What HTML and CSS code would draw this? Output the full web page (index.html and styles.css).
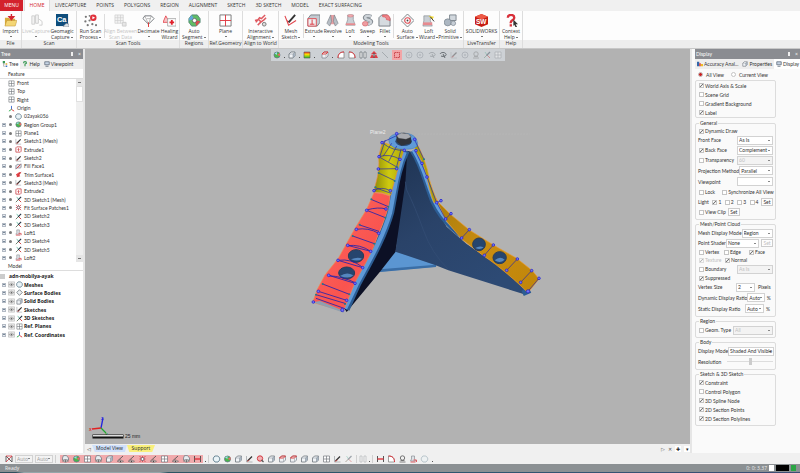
FILE: index.html
```html
<!DOCTYPE html>
<html lang="en">
<head>
<meta charset="utf-8">
<title>Model workspace</title>
<link rel="stylesheet" href="styles.css">
</head>
<body>
<svg class="defs" aria-hidden="true">
  <defs>
    <linearGradient id="redFace" x1="0" y1="0" x2="1" y2="1"><stop offset="0" stop-color="#ff6a62"/><stop offset=".6" stop-color="#f9544f"/><stop offset="1" stop-color="#fb6c64"/></linearGradient>
    <linearGradient id="yellowFace"><stop offset="0" stop-color="#8d8a08"/><stop offset=".5" stop-color="#cfca10"/><stop offset="1" stop-color="#aea80a"/></linearGradient>
    <linearGradient id="orangeFace" x1="0" y1="0" x2="1" y2="1"><stop offset="0" stop-color="#a87d0c"/><stop offset=".5" stop-color="#c98c10"/><stop offset="1" stop-color="#c08609"/></linearGradient>
    <linearGradient id="blueFace" x1="0" y1="0" x2=".6" y2="1"><stop offset="0" stop-color="#1f3453"/><stop offset=".5" stop-color="#2a4369"/><stop offset="1" stop-color="#2d4a74"/></linearGradient>
    <linearGradient id="rainbow" x1="0" y1="0" x2="0" y2="1"><stop offset="0" stop-color="#e33"/><stop offset=".4" stop-color="#fd0"/><stop offset="1" stop-color="#2b3"/></linearGradient>
  </defs>
  <symbol id="plane" viewBox="0 0 8 8"><path d="M1 1h6v6H1zM4 1v6M1 4h6" fill="#fff" stroke="#72777c" stroke-width=".7"/></symbol>
  <symbol id="axes" viewBox="0 0 8 8"><path d="M4 5V1" stroke="#36c" fill="none"/><path d="M4 5L1 7" stroke="#2a4" fill="none"/><path d="M4 5l3 2" stroke="#d33" fill="none"/></symbol>
  <symbol id="mesh" viewBox="0 0 8 8"><path d="M2.4 1h3L7.2 3v2L5.500 7h-3L.8 5V3z" fill="#e9f3f7" stroke="#5f7d8c" stroke-width=".9"/></symbol>
  <symbol id="region" viewBox="0 0 8 8"><circle cx="4" cy="4" r="3" fill="#4ab84a" stroke="#678" stroke-width=".8"/><path d="M4 4l3-2v3z" fill="#e66"/><path d="M4 4L1.500 2.500 4 1z" fill="#9de"/></symbol>
  <symbol id="sketch" viewBox="0 0 8 8"><path d="M1 1v6h6" fill="none" stroke="#8a9096" stroke-width=".6"/><path d="M2 6l4.500-4.500" stroke="#333" stroke-width="1.300"/><path d="M1.500 6.500L4 5" stroke="#d44" stroke-width=".7"/></symbol>
  <symbol id="sketch3" viewBox="0 0 8 8"><path d="M1 7l3-3 3 3" fill="none" stroke="#c33"/><path d="M2 1l2 3-3 3" fill="none" stroke="#3a8" stroke-width=".7"/><path d="M3.500 4.500L7 1" stroke="#234" stroke-width="1.300"/></symbol>
  <symbol id="treeicon" viewBox="0 0 8 8"><path d="M2 2v5h3M2 4h3" fill="none" stroke="#888" stroke-width=".7"/><path d="M1 0h3v3H1z" fill="#3a9a55"/><path d="M5 3h2v2H5z" fill="#e2a92c"/><path d="M5 6h2v2H5z" fill="#3c78c8"/></symbol>
  <symbol id="monitor" viewBox="0 0 8 8"><path d="M1 1h6v4H1z" fill="#c6d4e4" stroke="#4d5b6b" stroke-width=".9"/><path d="M2 7h4" stroke="#4d5b6b"/></symbol>
  <symbol id="box" viewBox="0 0 8 8"><path d="M1 3l2-2h4v4L5 7H1z" fill="#f1f4f7" stroke="#5c646c" stroke-width=".7"/><path d="M5 3l2-2v4L5 7z" fill="#a9b5c2"/><path d="M1 3h4v4M5 3l2-2" fill="none" stroke="#7d868f" stroke-width=".5"/></symbol>
  <symbol id="boxred" viewBox="0 0 8 8"><path d="M1 3l2-2h4v4L5 7H1z" fill="#eef0f3" stroke="#78808a" stroke-width=".7"/><path d="M1 3l2-2h4M1 3h4l2-2" fill="none" stroke="#d33" stroke-width=".9"/><path d="M5 3v4" stroke="#9aa2aa" stroke-width=".6"/></symbol>
  <symbol id="extrude" viewBox="0 0 8 8"><path d="M1 2l1-1h5v5L6 7H1z" fill="#fff" stroke="#c9434a" stroke-width=".9"/><path d="M4 3v3M3 4l1-1 1 1" fill="none" stroke="#c9232a" stroke-width=".8"/></symbol>
  <symbol id="fill" viewBox="0 0 8 8"><path d="M1 3c2-3 4 0 6-2v4c-2 2-4-1-6 2z" fill="#dce3ea" stroke="#667" stroke-width=".7"/><path d="M2 6l4-4" stroke="#d33"/></symbol>
  <symbol id="trim" viewBox="0 0 8 8"><path d="M1 4l4-3 2 1-2 2 1 2-3 1z" fill="#e2474d"/><path d="M2 7L7 1" stroke="#b22" stroke-width=".7"/></symbol>
  <symbol id="patch" viewBox="0 0 8 8"><path d="M1 1l6 6M7 1L1 7M4 1v6M1 4h6" stroke="#d8454c" stroke-width=".9"/><circle cx="4" cy="4" r="1.500" fill="#fff" stroke="#456" stroke-width=".7"/></symbol>
  <symbol id="zoomred" viewBox="0 0 8 8"><circle cx="3.500" cy="3.500" r="2.700" fill="#f3b2b5" stroke="#d33c44"/><path d="M5 5l2 2" stroke="#555" stroke-width="1.200"/></symbol>
  <symbol id="loft" viewBox="0 0 8 8"><path d="M2 1h3v3l1 2H1l1-2z" fill="#dfe3e8" stroke="#7b8086" stroke-width=".6"/><path d="M1 7h5M4 5h3v2" fill="none" stroke="#e05a60"/></symbol>
  <symbol id="surface" viewBox="0 0 8 8"><path d="M4 .8L7.200 4 4 7.200.8 4z" fill="#eef1f4" stroke="#667077" stroke-width=".9"/></symbol>
  <symbol id="eye" viewBox="0 0 8 8"><path d="M.5 1h7v6h-7z" fill="#eee" stroke="#aaa" stroke-width=".6"/><path d="M1 4q3-3 6 0-3 3-6 0z" fill="#fff" stroke="#777" stroke-width=".6"/><circle cx="4" cy="4" r="1" fill="#666"/></symbol>
  <symbol id="eyemesh" viewBox="0 0 8 8"><path d="M2 .6h3L7 3v2H1V3z" fill="#e7edf0" stroke="#65737b" stroke-width=".7"/><path d="M1 6q3-3 6 0-3 2.500-6 0z" fill="#fff" stroke="#555" stroke-width=".6"/><circle cx="4" cy="6" r=".8" fill="#333"/></symbol>
  <symbol id="eyeline" viewBox="0 0 8 8"><path d="M1 6L6.500 1" stroke="#555" stroke-width=".9"/><path d="M1 6.300q3-3 6 0-3 2.500-6 0z" fill="#fdd" stroke="#555" stroke-width=".6"/><circle cx="4" cy="6.200" r=".8" fill="#333"/></symbol>
  <symbol id="gauge" viewBox="0 0 8 8"><path d="M1 1v6M7 1v6" stroke="#555"/><path d="M1 4h6" stroke="#e0363d" stroke-width="1.400"/></symbol>
  <symbol id="arc" viewBox="0 0 8 8"><path d="M1 7V1c4 0 6 2 6 6z" fill="#fff" stroke="#777" stroke-width=".7"/><path d="M1 1c4 0 6 2 6 6" fill="none" stroke="#e0363d"/></symbol>
  <symbol id="arcleft" viewBox="0 0 8 8"><path d="M7 7V1C3 1 1 3 1 7z" fill="#fff" stroke="#777" stroke-width=".7"/><path d="M7 1C3 1 1 3 1 7" fill="none" stroke="#e0363d"/></symbol>
  <symbol id="mark" viewBox="0 0 8 8"><circle cx="4" cy="3" r="2.200" fill="none" stroke="#666" stroke-width=".9"/><path d="M1 7h6M2 5.500h4" stroke="#666" stroke-width=".8"/></symbol>
  <symbol id="ghost" viewBox="0 0 8 8"><circle cx="4" cy="4" r="3" fill="none" stroke="#a9afb5" stroke-width=".8"/><path d="M3 4h2M4 3v2" stroke="#a9afb5" stroke-width=".6"/></symbol>
  <symbol id="lasso" viewBox="0 0 8 8"><path d="M1 3c1-2 5-2 6 0s-3 3-5 2" fill="none" stroke="#666c71"/><path d="M4 3l2 4" stroke="#666c71"/></symbol>
  <symbol id="twin" viewBox="0 0 8 8"><path d="M1 1h2v6H1zM5 1h2v6H5z" fill="#fff" stroke="#70767c" stroke-width=".8"/></symbol>
  <symbol id="selrect" viewBox="0 0 8 8"><path d="M1.500 1.500h5v5h-5z" fill="none" stroke="#c0343b" stroke-width=".8" stroke-dasharray="1.500 .5"/></symbol>
</svg>

<nav class="menu">
  <button class="menu-main">MENU</button>
  <a href="#" class="home">HOME</a><a href="#">LIVECAPTURE</a><a href="#">POINTS</a><a href="#">POLYGONS</a><a href="#">REGION</a><a href="#">ALIGNMENT</a><a href="#">SKETCH</a><a href="#">3D SKETCH</a><a href="#">MODEL</a><a href="#">EXACT SURFACING</a>
</nav>

<header class="ribbon">
  <section class="group g-file"><div class="tools">
    <button class="tool w20"><svg viewBox="0 0 14 14"><path d="M1 4h4l1 1h6v8H1z" fill="#d8ab3d"/><path d="M3 7h11l-2 6H1z" fill="#f4d675" stroke="#b98d2c" stroke-width=".5"/><path d="M8 0v4M5.500 3L8 6l2.500-3z" stroke="#d42730" stroke-width="1.500" fill="#d42730"/></svg><span>Import</span><i></i></button>
  </div><h2>File</h2></section>
  <section class="group g-scan"><div class="tools">
    <button class="tool w26" disabled><svg viewBox="0 0 14 14"><path d="M2 2h3v9H2zM6 1h3v9H6z" fill="#eee" stroke="#bbb"/><path d="M9 5l4 3v4h-3" fill="none" stroke="#bbb"/></svg><span>LiveCapture</span><i></i></button>
    <button class="tool w26"><svg viewBox="0 0 14 14"><path d="M0 0h13v13H0z" fill="#0e4d7c"/><text x="1" y="9" class="ca">Ca</text><path d="M8 13l3-3 3 1v3H8z" fill="#d9e1e6" stroke="#667" stroke-width=".5"/></svg><span>Geomagic<br>Capture <i></i></span></button>
  </div><h2>Scan</h2></section>
  <section class="group g-scantools"><div class="tools">
    <button class="tool w26"><svg viewBox="0 0 14 14"><g fill="#777"><circle cx="2" cy="3" r="1.200"/><circle cx="6" cy="2" r="1"/><circle cx="1.500" cy="8" r="1.200"/><circle cx="6" cy="7" r="1.200"/><circle cx="4" cy="12" r="1.200"/><circle cx="9" cy="11" r="1.200"/><circle cx="13" cy="12" r="1.200"/></g><circle cx="10" cy="4" r="3.500" fill="#e0303a"/><path d="M9 2.300l3 1.700-3 1.700z" fill="#fff"/></svg><span>Run Scan<br>Process <i></i></span></button><hr>
    <button class="tool w32" disabled><svg viewBox="0 0 14 14"><path d="M1 1h9v9H1zM1 4h9M1 7h9M4 1v9M7 1v9" fill="#eee" stroke="#bbb" stroke-width=".7"/><path d="M9 9h4v4H9z" fill="#ddd" stroke="#bbb"/></svg><span>Align Between<br>Scan Data</span></button>
    <button class="tool w24"><svg viewBox="0 0 14 14"><path d="M3 2h7l3 3-6 6-6-6z" fill="#fff" stroke="#70757a"/><path d="M5 5h4M3 2l4 9 3-9" fill="none" stroke="#888" stroke-width=".6"/><path d="M7 9v5" stroke="#d33"/></svg><span>Decimate</span><i></i></button>
    <button class="tool w18"><svg viewBox="0 0 14 14"><path d="M0 9L3 2l4 7z" fill="#f9c3c5" stroke="#e0303a" stroke-width=".8"/><path d="M5 5h9v8H5z" fill="#fff" stroke="#999" stroke-width=".8"/><path d="M9.500 6.500v5M7 9h5" stroke="#df202b" stroke-width="2"/></svg><span>Healing<br>Wizard</span></button>
  </div><h2>Scan Tools</h2></section>
  <section class="group g-regions"><div class="tools">
    <button class="tool w26"><svg viewBox="0 0 14 14"><path d="M4 1h6l3 4v4l-4 4H4L1 9V5z" fill="#60bd64" stroke="#587"/><path d="M4 1l3 5-6 1V5z" fill="#61a8d8"/><path d="M7 6l6 2-4 5z" fill="#dd4950"/><circle cx="7" cy="7" r="2.300" fill="#fff" stroke="#555" stroke-width=".8"/></svg><span>Auto<br>Segment <i></i></span></button>
  </div><h2>Regions</h2></section>
  <section class="group g-ref"><div class="tools">
    <button class="tool w26"><svg viewBox="0 0 14 14"><path d="M1 1h12v12H1z" fill="#fff" stroke="#777"/><path d="M7 1v12M1 7h12" stroke="#df3841"/></svg><span>Plane</span><i></i></button>
  </div><h2>Ref.Geometry</h2></section>
  <section class="group g-align"><div class="tools">
    <button class="tool w32"><svg viewBox="0 0 14 14"><path d="M2 9l4-5 2 1 4-4M4 12l3-3 4-3 2-2M1 7l4-1 3 3" fill="none" stroke="#df5b62" stroke-width="1.600"/><circle cx="11" cy="11" r="2" fill="#ddd" stroke="#777"/></svg><span>Interactive<br>Alignment <i></i></span></button>
  </div><h2>Align to World</h2></section>
  <section class="group g-model"><div class="tools">
    <button class="tool w24"><svg viewBox="0 0 14 14"><path d="M1 2l4 10 8-5M3 7l3 2" fill="none" stroke="#e0454c" stroke-width="1.200"/><path d="M5 9l7-8" stroke="#333" stroke-width="2"/></svg><span>Mesh<br>Sketch <i></i></span></button><hr>
    <button class="tool w20"><svg viewBox="0 0 14 14"><path d="M1 5l3-4h10v8l-3 4H1z" fill="#c4cbd2" stroke="#798087"/><path d="M1 5h9v8H1z" fill="#eef0f2" stroke="#de4a51"/><path d="M5.500 6v5M3 11h5" stroke="#de3039"/></svg><span>Extrude</span><i></i></button>
    <button class="tool w18"><svg viewBox="0 0 14 14"><path d="M5 1h4l1 10H4z" fill="#e8a0a4"/><path d="M5 1L1 10l3 3 2-5zM9 1l4 9-3 3-2-5z" fill="#b7bec5" stroke="#7b8289" stroke-width=".7"/></svg><span>Revolve</span><i></i></button>
    <button class="tool w17"><svg viewBox="0 0 14 14"><path d="M4 1h6v5l2 6H2l2-6z" fill="#c9cfd5" stroke="#858b91" stroke-width=".7"/><ellipse cx="7" cy="2" rx="3" ry="1.200" fill="#f4b8bb" stroke="#d9666c" stroke-width=".6"/><path d="M2 10h10v2H2z" fill="#e78b90"/></svg><span>Loft</span><i></i></button>
    <button class="tool w18"><svg viewBox="0 0 14 14"><path d="M11 3C5 0 1 5 7 6s5 4 0 5" fill="none" stroke="#858c93" stroke-width="4"/><path d="M11 3C5 0 2 5 7 6s5 4 0 5" fill="none" stroke="#cdd3d8" stroke-width="2.500"/><ellipse cx="4.500" cy="10.500" rx="3" ry="2.500" fill="#ef9ca0" stroke="#cc5c62" stroke-width=".6"/></svg><span>Sweep</span><i></i></button>
    <button class="tool w17"><svg viewBox="0 0 14 14"><path d="M1 4l3-3h6l3 4v8H1z" fill="#d6dbe0" stroke="#777d84"/><path d="M5 1h5c3 1 3 4 3 6l-4-1c0-2-1-3-4-3z" fill="#ee858a" stroke="#d5434b" stroke-width=".6"/></svg><span>Fillet</span><i></i></button><hr>
    <button class="tool w26"><svg viewBox="0 0 14 14"><path d="M7 0l7 7-7 7-7-7z" fill="#f5f6f7" stroke="#777d82"/><circle cx="7" cy="7" r="3" fill="#fff" stroke="#df4b52" stroke-width="1.200"/><circle cx="7" cy="7" r="1" fill="#444"/></svg><span>Auto<br>Surface <i></i></span></button>
    <button class="tool w17"><svg viewBox="0 0 14 14"><path d="M2 2h7v5l2 6H1l1-6z" fill="#c9cfd5" stroke="#858b91" stroke-width=".7"/><path d="M1 9h10v3H1z" fill="#e78b90"/><path d="M7 2l6 1-2 3z" fill="#f4db36"/><path d="M9 3l4 5" stroke="#333"/></svg><span>Loft<br>Wizard <i></i></span></button>
    <button class="tool w26"><svg viewBox="0 0 14 14"><path d="M6 1h7v6H6z" fill="#d2d8de" stroke="#7c858e"/><circle cx="4" cy="9" r="3.800" fill="#acb7c2" stroke="#737d87" stroke-width=".7"/><circle cx="10" cy="10" r="2.500" fill="#c6ced6" stroke="#737d87" stroke-width=".7"/></svg><span>Solid<br>Primitive <i></i></span></button>
  </div><h2>Modeling Tools</h2></section>
  <section class="group g-live"><div class="tools">
    <button class="tool w32"><svg viewBox="0 0 14 14"><path d="M0 3l7-3 7 3v8l-7 3-7-3z" fill="#c61c13"/><path d="M0 3l7-3 7 3-7 3z" fill="#ee5a46"/><text x="1" y="11" class="sw">SW</text></svg><span>SOLIDWORKS</span><i></i></button>
  </div><h2>LiveTransfer</h2></section>
  <section class="group g-help"><div class="tools">
    <button class="tool w20"><svg viewBox="0 0 14 14"><path d="M3 4c0-4 7-4 7 0 0 3-4 2-4 6" fill="none" stroke="#d9303a" stroke-width="2.500"/><path d="M5 11h2.500v2.500H5z" fill="#d9303a"/><path d="M9 6l5 5-2.500 0 1.500 3-1.500.5L10 11.500 9 13z" fill="#333"/></svg><span>Context<br>Help <i></i></span></button>
  </div><h2>Help</h2></section>
</header>

<main class="work">
  <aside class="left">
    <div class="titlebar"><b>Tree</b><span class="pin"></span><span>×</span></div>
    <div class="tabs"><button class="tab on"><svg><use href="#treeicon"/></svg>Tree</button><button class="tab"><svg viewBox="0 0 8 8"><path d="M2 3c0-3 4-3 4 0L4 4v3" fill="none" stroke="#3a9a55" stroke-width="1.500"/></svg>Help</button><button class="tab"><svg><use href="#monitor"/></svg>Viewpoint</button></div>
    <h3>Feature</h3>
    <div class="scrolled">
      <ul class="tree feature">
        <li class="flat"><svg><use href="#plane"/></svg>Front</li>
        <li class="flat"><svg><use href="#plane"/></svg>Top</li>
        <li class="flat"><svg><use href="#plane"/></svg>Right</li>
        <li class="flat"><svg><use href="#axes"/></svg>Origin</li>
        <li><s class="no"></s><u></u><svg><use href="#mesh"/></svg>02ayak056</li>
        <li><s></s><u></u><svg><use href="#region"/></svg>Region Group1</li>
        <li><s></s><u></u><svg><use href="#plane"/></svg>Plane1</li>
        <li><s></s><u></u><svg><use href="#sketch"/></svg>Sketch1 (Mesh)</li>
        <li><s></s><u></u><svg><use href="#extrude"/></svg>Extrude1</li>
        <li><s></s><u></u><svg><use href="#sketch"/></svg>Sketch2</li>
        <li><s></s><u></u><svg><use href="#fill"/></svg>Fill Face1</li>
        <li><s></s><u></u><svg><use href="#trim"/></svg>Trim Surface1</li>
        <li><s></s><u></u><svg><use href="#sketch"/></svg>Sketch3 (Mesh)</li>
        <li><s></s><u></u><svg><use href="#extrude"/></svg>Extrude2</li>
        <li><s></s><u></u><svg><use href="#sketch3"/></svg>3D Sketch1 (Mesh)</li>
        <li><s></s><u></u><svg><use href="#patch"/></svg>Fit Surface Patches1</li>
        <li><s></s><u></u><svg><use href="#sketch3"/></svg>3D Sketch2</li>
        <li><s></s><u></u><svg><use href="#sketch3"/></svg>3D Sketch3</li>
        <li><s></s><u></u><svg><use href="#loft"/></svg>Loft1</li>
        <li><s></s><u></u><svg><use href="#sketch3"/></svg>3D Sketch4</li>
        <li><s></s><u></u><svg><use href="#sketch3"/></svg>3D Sketch5</li>
        <li><s></s><u></u><svg><use href="#loft"/></svg>Loft2</li>
      </ul>
      <div class="scrollbar"><span class="arrow up"></span><span class="thumb"></span><span class="arrow down"></span></div>
    </div>
    <h3 class="model-title">Model</h3>
    <ul class="tree bodies">
      <li class="root"><em></em>adn-mobilya-ayak</li>
      <li><s></s><svg><use href="#eye"/></svg><svg><use href="#mesh"/></svg>Meshes</li>
      <li><s></s><svg><use href="#eye"/></svg><svg><use href="#surface"/></svg>Surface Bodies</li>
      <li><s></s><svg><use href="#eye"/></svg><svg><use href="#box"/></svg>Solid Bodies</li>
      <li><s></s><svg><use href="#eye"/></svg><svg><use href="#sketch"/></svg>Sketches</li>
      <li><s></s><svg><use href="#eye"/></svg><svg><use href="#sketch3"/></svg>3D Sketches</li>
      <li><s></s><svg><use href="#eye"/></svg><svg><use href="#plane"/></svg>Ref. Planes</li>
      <li><s></s><svg><use href="#eye"/></svg><svg><use href="#axes"/></svg>Ref. Coordinates</li>
    </ul>
  </aside>

  <section class="center">
    <div class="viewport">
      <svg class="scene" viewBox="85 49 605 395">
        <g transform="translate(300 120) scale(.33333)">
          <path d="M355 42H690" stroke="#c2c2c2" stroke-dasharray="5 4"/>
          <path d="M285 393L410 433 408 440 240 455z" fill="#5b96d2"/><path d="M240 448L408 434V441L240 456z" fill="#3a6ea6"/>
          <path d="M322 92L322 190 287 395 240 455 140 576 130 560 170 490 225 385 260 280 275 215 295 140z" fill="#0c1025"/>
          <path d="M322 92L345 98 375 170 400 250 440 320 500 372 600 440 682 512 670 522 445 451 405 435 286 395 316 190z" fill="url(#blueFace)"/>
          <path d="M316 185L320 210Q345 260 370 330T445 448" fill="none" stroke="#354f76" stroke-width="2"/>
          <path d="M338 92C370 140 380 200 400 245 430 310 480 345 535 382S655 462 682 514L668 520" fill="none" stroke="#2c5d94" stroke-width="17"/>
          <path d="M340 90C372 140 383 200 403 243 433 307 482 342 538 378S657 460 684 512" fill="none" stroke="#649fdd" stroke-width="10"/>
          <path d="M318 92C290 150 286 205 272 275 250 355 205 430 172 492L138 568" fill="none" stroke="#2c5d94" stroke-width="22"/>
          <path d="M314 96C288 155 284 210 270 278 248 355 203 430 170 492L135 566" fill="none" stroke="#5f9ad8" stroke-width="13"/>
          <path d="M222 218Q245 218 270 228C266 270 250 310 232 350 215 405 180 455 163 492L130 574 38 547 52 508 75 465 115 415 165 325 200 268z" fill="url(#redFace)" stroke="#f58a4c" stroke-width="2"/>
          <path d="M38 547L60 543 130 572 132 578z" fill="#8fa0b0"/>
          <path d="M247 66L312 90C296 135 284 180 272 226Q245 216 222 216C228 180 240 160 236 110z" fill="url(#yellowFace)" stroke="#ee8a35" stroke-width="2"/>
          <path d="M345 60Q362 90 373 120T388 178Q396 208 412 245L402 248C385 210 382 150 358 110L345 90z" fill="#a8a009" stroke="#ee9a35" stroke-width="2"/>
          <path d="M405 230L415 247 450 282 508 330 580 375 650 415 697 452 717 477 684 518C650 485 600 440 550 407L485 357 437 300z" fill="url(#orangeFace)" stroke="#ef9a2a" stroke-width="2"/>
          <path d="M266 60Q268 40 310 39 350 40 353 70 355 88 316 88 267 88 266 60z" fill="#5f9ad8" stroke="#386a9e"/>
          <ellipse cx="311" cy="64" rx="25" ry="14" fill="#2c4a72"/>
          <path d="M289 46L312 38 333 48V70L304 77 290 65z" fill="#303339"/><path d="M289 46L304 39 325 41 334 51 318 58 296 55z" fill="#a9abb0" stroke="#444"/>
          <g stroke="#283b58" stroke-width="3"><ellipse cx="168" cy="408" rx="23" ry="19" fill="#26456e"/><ellipse cx="140" cy="459" rx="24" ry="18" fill="#26456e"/><ellipse cx="537" cy="373" rx="19" ry="19" fill="#26456e"/><ellipse cx="599" cy="413" rx="20" ry="18" fill="#26456e"/></g>
          <path d="M153 418q20-8 33-2-12 10-33 2zM120 468q20-14 40-2-12 12-40 2zM526 384q13-8 25-2-10 9-25 2zM584 421q16-14 30-2-14 13-30 2z" fill="#5587c0"/>
          <g fill="none" stroke="#1f23b0" stroke-width="2">
            <path d="M246 68Q280 95 315 90M237 110Q270 100 300 118M236 110L292 142M235 147L290 146M234 158L284 182M222 212Q245 198 270 212M226 203L273 220M256 60L240 108M275 70L250 108M290 78L266 125M303 88L290 140M249 66L292 46"/>
            <path d="M213 238L265 260M200 270Q235 260 258 267M198 270L256 293M179 315L237 334M169 328Q205 322 236 340M158 348L223 371M142 376L213 394M142 377Q180 372 212 394M114 421Q155 415 188 442M114 421L188 443M86 466L165 490M86 467Q130 470 163 487M68 492L148 523M55 514L140 541M48 524L138 551M48 535L135 566" stroke-width="2.500"/>
            <path d="M343 58L372 118M345 92L364 130 381 171 410 248 437 297M410 248L423 242M437 297L453 280M485 354L508 329M553 406L580 375M620 451L652 417M662 487L695 452M684 514L717 475"/>
          </g>
          <g fill="#7474f0" stroke="#1818d0" stroke-width="2"><circle cx="246" cy="68" r="4"/><circle cx="290" cy="41" r="4"/><circle cx="344" cy="58" r="4"/><circle cx="313" cy="91" r="4"/><circle cx="348" cy="92" r="4"/><circle cx="300" cy="118" r="4"/><circle cx="237" cy="110" r="4"/><circle cx="235" cy="147" r="4"/><circle cx="290" cy="146" r="4"/><circle cx="222" cy="212" r="4"/><circle cx="271" cy="212" r="4"/><circle cx="200" cy="271" r="4"/><circle cx="258" cy="267" r="4"/><circle cx="169" cy="328" r="4"/><circle cx="236" cy="340" r="4"/><circle cx="143" cy="376" r="4"/><circle cx="212" cy="394" r="4"/><circle cx="114" cy="421" r="4"/><circle cx="188" cy="443" r="4"/><circle cx="86" cy="466" r="4"/><circle cx="165" cy="490" r="4"/><circle cx="55" cy="514" r="4"/><circle cx="140" cy="541" r="4"/><circle cx="40" cy="546" r="4"/><circle cx="127" cy="570" r="5"/><circle cx="366" cy="130" r="4"/><circle cx="381" cy="171" r="4"/><circle cx="410" cy="248" r="4"/><circle cx="423" cy="242" r="4"/><circle cx="437" cy="297" r="4"/><circle cx="453" cy="281" r="4"/><circle cx="485" cy="354" r="4"/><circle cx="508" cy="329" r="4"/><circle cx="553" cy="406" r="4"/><circle cx="580" cy="375" r="4"/><circle cx="620" cy="451" r="4"/><circle cx="652" cy="417" r="4"/><circle cx="662" cy="487" r="4"/><circle cx="695" cy="452" r="4"/><circle cx="684" cy="514" r="5"/><circle cx="717" cy="475" r="4"/></g>
          <g fill="#1f7d8a"><circle cx="292" cy="142" r="3"/><circle cx="236" cy="159" r="3"/><circle cx="284" cy="183" r="3"/><circle cx="226" cy="202" r="3"/><circle cx="214" cy="238" r="3"/><circle cx="265" cy="260" r="3"/><circle cx="256" cy="293" r="3"/><circle cx="179" cy="314" r="3"/><circle cx="158" cy="348" r="3"/><circle cx="223" cy="371" r="3"/><circle cx="68" cy="492" r="3"/><circle cx="148" cy="523" r="3"/><circle cx="48" cy="524" r="3"/><circle cx="135" cy="552" r="3"/><circle cx="372" cy="118" r="3"/></g>
        </g>
        <text x="370" y="134" class="plane-name">Plane2</text>
        <path d="M101 428l2-10" stroke="#2222e0" stroke-width="1.300"/><path d="M101 428l-9 1" stroke="#e02222" stroke-width="1.300"/><path d="M101 428l5 5" stroke="#22a833" stroke-width="1.300"/>
        <text x="101" y="420" class="ax z">Z</text><text x="89" y="431" class="ax x">X</text><text x="105" y="436" class="ax y">Y</text>
        <path d="M92.500 434.500h31v4h-31z" fill="#111"/><path d="M93 435h30v1.500H93z" fill="#ddd"/><text x="125" y="438" class="scale">25 mm</text>
      </svg>
      <div class="viewbar">
        <svg><use href="#region"/></svg><i></i><svg><use href="#box"/></svg><i></i><svg viewBox="0 0 8 8"><path d="M1 1h6v6H1z" fill="url(#rainbow)" stroke="#555" stroke-width=".6"/></svg><i class="wide"></i><svg><use href="#boxred"/></svg><i></i><svg><use href="#arcleft"/></svg><svg><use href="#arc"/></svg><svg><use href="#twin"/></svg><svg viewBox="0 0 8 8"><path d="M4 0l3 3H1zM0 7l2-4 2 3 2-3 2 4" fill="#dd3d45"/><path d="M4 2v5" stroke="#555"/></svg><svg viewBox="0 0 8 8"><path d="M1 1l6 6" stroke="#9ba1a6" stroke-width=".8"/></svg><span class="hot"><svg><use href="#selrect"/></svg></span><svg><use href="#ghost"/></svg><svg><use href="#ghost"/></svg><svg class="dim"><use href="#lasso"/></svg><svg><use href="#lasso"/></svg><svg class="dim"><use href="#sketch"/></svg><svg><use href="#ghost"/></svg><svg class="dim"><use href="#mark"/></svg><svg class="dim"><use href="#sketch3"/></svg><svg class="dim"><use href="#plane"/></svg>
      </div>
    </div>
    <div class="sheets"><span class="nav">◁</span><button class="sheet blue">Model View</button><button class="sheet yellow">Support</button><span class="end"><span>▷</span><span>✕</span><button aria-label="Add">✚</button><button aria-label="List">▾</button></span></div>
  </section>

  <aside class="right">
    <div class="titlebar"><b>Display</b><span class="pin"></span><span>×</span></div>
    <div class="tabs"><button class="tab"><svg viewBox="0 0 8 8"><path d="M0 1h3v6H0z" fill="#36a"/><path d="M3 3h2v4H3z" fill="#d33"/><path d="M5 4h3v3H5z" fill="#eb2"/></svg>Accuracy Anal...</button><button class="tab"><svg><use href="#box"/></svg>Properties</button><button class="tab on"><svg><use href="#monitor"/></svg>Display</button></div>
    <form class="form">
      <div class="row views"><label><input type="radio" name="view" checked>All View</label><label><input type="radio" name="view">Current View</label></div>
      <div class="card">
        <div class="row"><label><input type="checkbox" checked>World Axis &amp; Scale</label></div>
        <div class="row"><label><input type="checkbox">Scene Grid</label></div>
        <div class="row"><label><input type="checkbox">Gradient Background</label></div>
        <div class="row"><label><input type="checkbox" checked>Label</label></div>
      </div>
      <fieldset><legend>General</legend>
        <div class="row"><label><input type="checkbox" checked>Dynamic Draw</label></div>
        <div class="row sel"><label for="ff">Front Face</label><select id="ff" class="s36"><option>As Is</option></select></div>
        <div class="row sel"><label><input type="checkbox" checked>Back Face</label><select class="s36" aria-label="Back face mode"><option>Complement</option></select></div>
        <div class="row sel"><label><input type="checkbox">Transparency</label><select class="s36" disabled aria-label="Transparency value"><option>60</option></select></div>
        <div class="row tall"><label for="pm">Projection Method</label><select id="pm" class="s36"><option>Parallel</option></select></div>
        <div class="row tall"><label for="vp">Viewpoint</label><select id="vp" class="s36"><option></option></select></div>
        <div class="row sel split"><label><input type="checkbox">Lock</label><label><input type="checkbox">Synchronize All View</label></div>
        <div class="row sel lights"><span>Light</span><label><input type="checkbox" checked>1</label><label><input type="checkbox">2</label><label><input type="checkbox">3</label><label><input type="checkbox">4</label><button type="button" class="set">Set</button></div>
        <div class="row sel clip"><label><input type="checkbox">View Clip</label><button type="button" class="set">Set</button></div>
      </fieldset>
      <fieldset><legend>Mesh/Point Cloud</legend>
        <div class="row sel"><label for="md">Mesh Display Mode</label><select id="md" class="s33"><option>Region</option></select></div>
        <div class="row sel"><label for="ps">Point Shader</label><select id="ps" class="s33 push"><option>None</option></select><button type="button" class="set" disabled>Set</button></div>
        <div class="row thirds"><label><input type="checkbox">Vertex</label><label><input type="checkbox">Edge</label><label><input type="checkbox" checked>Face</label></div>
        <div class="row thirds"><label class="off"><input type="checkbox" checked disabled>Texture</label><label><input type="checkbox" checked>Normal</label></div>
        <div class="row sel"><label><input type="checkbox">Boundary</label><select class="s36" disabled aria-label="Boundary mode"><option>As Is</option></select></div>
        <div class="row"><label><input type="checkbox" checked>Suppressed</label></div>
        <div class="row sel"><label for="vs">Vertex Size</label><select id="vs" class="s21"><option>2</option></select><span class="unit">Pixels</span></div>
        <div class="row tall"><label for="dr">Dynamic Display Ratio</label><select id="dr" class="s21"><option>Auto</option></select><span class="pct">%</span></div>
        <div class="row tall"><label for="sr">Static Display Ratio</label><select id="sr" class="s21"><option>Auto</option></select><span class="pct">%</span></div>
      </fieldset>
      <fieldset><legend>Region</legend>
        <div class="row sel"><label><input type="checkbox">Geom. Type</label><select class="s40" disabled aria-label="Geometry type"><option>All</option></select></div>
      </fieldset>
      <fieldset><legend>Body</legend>
        <div class="row sel"><label for="dm">Display Mode</label><select id="dm" class="s48"><option>Shaded And Visible</option></select></div>
        <div class="row tall res"><label for="rs">Resolution</label><input id="rs" type="range"></div>
      </fieldset>
      <fieldset class="sk"><legend>Sketch &amp; 3D Sketch</legend>
        <div class="row"><label><input type="checkbox" checked>Constraint</label></div>
        <div class="row"><label><input type="checkbox">Control Polygon</label></div>
        <div class="row"><label><input type="checkbox" checked>3D Spline Node</label></div>
        <div class="row"><label><input type="checkbox" checked>2D Section Points</label></div>
        <div class="row"><label><input type="checkbox" checked>2D Section Polylines</label></div>
      </fieldset>
    </form>
  </aside>
</main>

<div class="bottombar">
  <svg class="first" viewBox="0 0 8 8"><path d="M1 1v6M7 1v6M1 1l6 6" stroke="#555" stroke-width=".9"/><path d="M1 7l6-6M1 1h6" stroke="#dc3941" stroke-width=".8"/></svg>
  <select disabled aria-label="Point filter"><option>Auto</option></select><select disabled aria-label="Mesh filter"><option>Auto</option></select>
  <span class="bar"></span>
  <div class="toggles"><svg><use href="#eyemesh"/></svg><svg><use href="#region"/></svg><svg><use href="#plane"/></svg><svg><use href="#eyemesh"/></svg><svg><use href="#box"/></svg><svg><use href="#eyeline"/></svg><svg><use href="#eyeline"/></svg><svg><use href="#patch"/></svg><svg><use href="#eyeline"/></svg><svg><use href="#plane"/></svg><svg><use href="#eyeline"/></svg><svg><use href="#eyemesh"/></svg><svg><use href="#gauge"/></svg></div>
  <i></i><span class="bar"></span>
  <div class="picks"><svg><use href="#mesh"/></svg><svg><use href="#region"/></svg><svg><use href="#box"/></svg><svg><use href="#sketch"/></svg><svg><use href="#zoomred"/></svg><svg><use href="#box"/></svg><svg><use href="#boxred"/></svg><svg><use href="#boxred"/></svg><svg><use href="#box"/></svg><svg><use href="#box"/></svg><svg><use href="#plane"/></svg><svg><use href="#sketch"/></svg><svg class="dim"><use href="#sketch3"/></svg></div>
  <span class="bar"></span><svg class="dim"><use href="#twin"/></svg><i></i><span class="bar"></span>
  <div class="picks"><svg><use href="#gauge"/></svg><svg><use href="#arc"/></svg><svg><use href="#mark"/></svg><svg><use href="#loft"/></svg><svg class="dim"><use href="#mesh"/></svg></div><i></i>
</div>
<footer class="status"><span>Ready</span><span class="time">0: 0: 3.37</span><span class="led white"></span><span class="led black"></span><span class="led green"></span></footer>
<div class="strip"></div>
</body>
</html>
```
FILE: styles.css
```css
* { box-sizing: border-box; }
html, body { height: 100%; }
body {
  margin: 0; display: flex; flex-direction: column; overflow: hidden;
  font: 5px/6px "Open Sans", "Noto Sans", sans-serif; color: #333; background: #f0f0f0;
}
button, select, input { font: inherit; color: inherit; margin: 0; padding: 0; }
button { border: 0; background: none; }
svg { flex: none; display: block; }
.defs { position: absolute; width: 0; height: 0; }
.dim { opacity: .4; }
i { font-style: normal; }

/* menu */
.menu { display: flex; align-items: stretch; height: 11px; background: #f0f0f0; }
.menu a { color: #333; text-decoration: none; line-height: 11px; padding: 0 5px; white-space: nowrap; }
.menu-main { width: 23px; background: #d3222c; color: #fff; line-height: 11px; }
.menu .home { width: 26px; margin-left: 1px; padding: 0; text-align: center; background: #fdfdfd; color: #d3222c; border: 1px solid #ddd; border-width: 0 1px; }

/* ribbon */
.ribbon { display: flex; height: 38px; background: #fdfdfd; border-bottom: 1px solid #c8c8c8; }
.group { display: flex; flex-direction: column; flex: none; border-right: 1px solid #ddd; }
.group h2 { margin: 0; font: inherit; text-align: center; height: 8px; line-height: 7px; background: #eee; white-space: nowrap; }
.tools { flex: 1; display: flex; justify-content: center; padding-top: 3px; }
.tools hr { width: 1px; height: 24px; margin: 0; border: 0; background: #ddd; }
.tool { display: flex; flex-direction: column; align-items: center; line-height: 6px; white-space: nowrap; }
.tool svg { width: 13px; height: 13px; margin-bottom: 1px; }
.tool:disabled { color: #c4c4c4; }
.tool:disabled svg { opacity: .7; }
.tool i { display: inline-block; width: 2px; height: 1px; background: #777; vertical-align: middle; }
.tool > i { margin-top: 2px; }
.w17 { width: 17px; } .w18 { width: 18px; } .w20 { width: 20px; } .w24 { width: 24px; } .w26 { width: 26px; } .w32 { width: 32px; }
.g-file { width: 22px; } .g-scan { width: 55px; } .g-scantools { width: 103px; } .g-regions { width: 29px; }
.g-ref { width: 34px; } .g-align { width: 36px; } .g-model { width: 185px; } .g-live { width: 36px; } .g-help { width: 23px; }
.ribbon::after { content: ""; flex: 1; background: linear-gradient(#fdfdfd 29px, #eee 29px); }
.ca { font: bold 8px "Liberation Sans", sans-serif; fill: #fff; }
.sw { font: bold 7px "Liberation Sans", sans-serif; fill: #fff; }

/* work area */
.work { flex: 1; min-height: 0; display: flex; }
.left { width: 83px; background: #fff; }
.center { flex: 1; display: flex; flex-direction: column; min-width: 0; border-left: 2px solid #e6e6e6; border-right: 2px solid #e6e6e6; }
.right { width: 108px; background: #fafafa; padding-left: 3px; }
.titlebar { display: flex; align-items: center; gap: 5px; height: 10px; padding: 0 2px 0 1px; background: #8a8c91; color: #fff; }
.titlebar b { flex: 1; font-weight: 400; }
.pin { width: 2px; height: 4px; background: #eee; }
.tabs { display: flex; height: 10px; background: #eee; }
.tab { display: flex; align-items: center; gap: 1px; padding: 0 2px; white-space: nowrap; }
.tab svg { width: 6px; height: 6px; }
.tab.on { background: #fff; }

/* trees */
.left { font-family: Lato, "Open Sans", sans-serif; }
.left h3 { margin: 0; font: inherit; height: 10px; line-height: 10px; padding-left: 8px; border-bottom: 1px solid #ddd; }
.left .model-title { height: 9px; line-height: 8px; }
.scrolled { display: flex; height: 183px; }
.tree { margin: 0; padding: 0; list-style: none; display: grid; grid-auto-rows: 1fr; }
.feature { flex: 1; }
.bodies { height: 67px; margin-top: 1px; font-family: "Noto Sans", sans-serif; font-weight: 700; color: #222; }
.tree li { display: flex; align-items: center; min-height: 0; padding-left: 2px; white-space: nowrap; }
.tree .flat { padding-left: 8px; }
.tree .root { padding-left: 0; }
.tree .root em { width: 5px; height: 5px; background: #ccc; margin-right: 4px; }
.tree svg { width: 7px; height: 7px; margin-right: 2px; }
.bodies svg { margin-right: 1px; }
.tree s { width: 4px; height: 4px; margin-right: 2px; background: linear-gradient(#789, #789) center/2px 1px no-repeat #e8ebf0; border: 1px solid #b3bac4; }
.tree s.no { visibility: hidden; }
.tree u { width: 3px; height: 3px; margin: 0 3px 0 1px; border-radius: 50%; background: #777; }
.scrollbar { width: 7px; display: flex; flex-direction: column; background: #f0f0f0; }
.thumb { height: 16px; background: #fff; border: 1px solid #e0e0e0; margin-bottom: auto; }
.arrow { height: 7px; background: linear-gradient(#777, #777) center/3px 1px no-repeat #e6e6e6; }

/* viewport */
.viewport { flex: 1; min-height: 0; position: relative; background: #b2b2b2; }
.scene { width: 100%; height: 100%; }
.plane-name { font: 5px "Liberation Sans", sans-serif; fill: #eee; }
.ax { font: bold 4px "Liberation Sans", sans-serif; }
.ax.x { fill: #e02222; } .ax.y { fill: #22a833; } .ax.z { fill: #2222e0; }
.scale { font: 5px "Liberation Sans", sans-serif; fill: #222; }
.viewbar { position: absolute; top: 0; left: 50%; transform: translateX(-50%); width: 234px; height: 12px; padding: 0 2px; display: flex; align-items: center; justify-content: space-between; background: #cdd1d5; }
.viewbar svg { width: 8px; height: 8px; }
.viewbar i, .bottombar i { width: 1px; height: 1px; margin-top: 5px; background: #555; }
.viewbar .wide { margin-right: 3px; }
.hot { background: #f2a5a7; padding: 1px; }
.sheets { display: flex; align-items: center; height: 9px; background: #f0f0f0; }
.nav { width: 7px; text-align: center; }
.sheet { height: 7px; line-height: 7px; color: #222; padding: 0 4px; }
.blue { background: #cfe0fb; width: 35px; clip-path: polygon(0 0, 100% 0, 94% 100%, 8% 100%); }
.yellow { background: #f9f07c; width: 28px; clip-path: polygon(0 0, 100% 0, 90% 100%, 8% 100%); }
.end { margin-left: auto; display: flex; gap: 3px; align-items: center; color: #555; }
.end button { width: 6px; height: 6px; line-height: 6px; background: #fff; color: #222; }

/* display form */
.right { font-family: Lato, "Open Sans", sans-serif; }
.form { width: 81px; }
.card, fieldset { border: 1px solid #dcdcdc; border-radius: 2px; }
.card { padding: 0 2px; margin-bottom: 2px; }
fieldset { min-width: 0; margin: 0 0 1px; padding: 1px 2px 2px; }
legend { padding: 0 1px; margin-left: 1px; height: 6px; }
.row { display: flex; align-items: center; height: 8px; white-space: nowrap; }
.card .row, .sk .row { height: 9px; }
.row label { display: flex; align-items: center; }
.views { height: 11px; gap: 6px; padding-left: 2px; }
.sel { height: 10px; } .tall { height: 11px; }
.row select, .push { margin-left: auto; }
select { appearance: none; height: 9px; border: 1px solid #d2d2d2; border-radius: 0; padding: 0 0 0 1px; background: linear-gradient(#888, #888) right 2px center/2px 1px no-repeat #fff; }
select:disabled { color: #c0c0c0; background-color: #f3f3f3; opacity: 1; }
.s21 { width: 19px; } .s33 { width: 33px; } .s36 { width: 36px; } .s40 { width: 40px; } .s48 { width: 48px; }
input[type=checkbox], input[type=radio] { appearance: none; width: 5px; height: 5px; margin: 0 1px; border: 1px solid #c4c4c4; background: #fff; flex: none; }
input[type=radio] { border-radius: 50%; margin-right: 3px; }
input[type=radio]:checked { background: #c22; }
input[type=checkbox]:checked { background: linear-gradient(135deg, #fff 30%, #777 50%, #fff 70%); }
.off, .set:disabled { color: #c0c0c0; }
.off input { opacity: .5; }
.split { gap: 6px; }
.lights { justify-content: space-between; }
.set { width: 12px; height: 8px; line-height: 6px; border: 1px solid #ccc; background: #fdfdfd; text-align: center; }
.row .push + .set { margin-left: 2px; }
.clip { gap: 2px; }
.thirds label { width: 26px; }
.unit { width: 18px; padding-left: 3px; }
.pct { width: 9px; padding-left: 2px; }
.res { justify-content: space-between; }
input[type=range] { appearance: none; width: 46px; height: 8px; background: linear-gradient(#ddd, #ddd) center/100% 1px no-repeat; }
input[type=range]::-webkit-slider-thumb { appearance: none; width: 3px; height: 7px; background: #ccc; }

/* bottom */
.bottombar { display: flex; align-items: center; height: 11px; padding-left: 5px; gap: 2px; background: #f0f0f0; }
.bottombar svg { width: 8px; height: 8px; }
.bottombar select { width: 18px; height: 8px; color: #999; }
.bar { width: 1px; height: 8px; background: #d0d0d0; }
.toggles, .picks { display: flex; }
.toggles { margin-left: 2px; }
.toggles svg, .picks svg { width: 11px; padding: 0 1px; }
.toggles svg { background: #f1aaac; }
.status { display: flex; align-items: center; height: 8px; padding: 0 4px 0 5px; gap: 2px; background: #8b9093; color: #eee; line-height: 8px; }
.time { margin-left: auto; }
.led { width: 5px; height: 6px; }
.white { background: #fff; } .black { background: #000; width: 13px; } .green { background: #2ba544; }
.strip { height: 1px; background: linear-gradient(90deg, #2f4f5d 2%, #94a6aa 3%, #94a6aa 20%, #2c5563 21%, #2f5670 60%, #3d4d75); }
```
